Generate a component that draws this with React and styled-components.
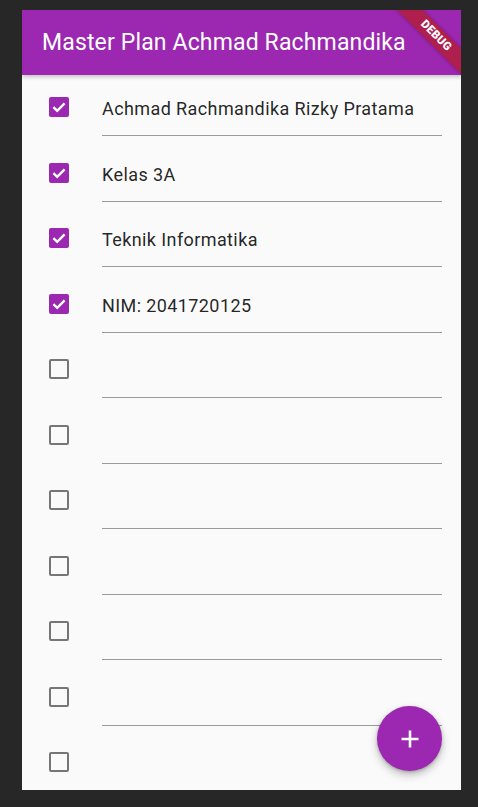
import React from 'react';
import styled, { createGlobalStyle } from 'styled-components';

const GlobalStyle = createGlobalStyle`
  html, body {
    margin: 0;
    padding: 0;
    background: #272727;
    font-family: Roboto, 'Noto Sans', sans-serif;
  }
`;

const Screen = styled.div`
  width: 478px;
  height: 807px;
  box-sizing: border-box;
  padding: 10px 17px 17px 22px;
  display: flex;
`;

const Phone = styled.div`
  position: relative;
  flex: 1;
  display: flex;
  flex-direction: column;
  background: #fafafa;
  overflow: hidden;
`;

const AppBar = styled.header`
  position: relative;
  z-index: 2;
  height: 65px;
  flex-shrink: 0;
  display: flex;
  align-items: center;
  padding-left: 20px;
  background: #9c27b0;
  box-shadow: 0 2px 4px rgba(0, 0, 0, 0.22);
`;

const Title = styled.h1`
  margin: 0;
  color: #fff;
  font-size: 23px;
  letter-spacing: 0.15px;
  font-weight: 400;
  white-space: nowrap;
`;

const List = styled.div`
  flex: 1;
  overflow: hidden;
`;

const Row = styled.div`
  height: 65.5px;
  display: flex;
  align-items: flex-start;
`;

const CheckCell = styled.div`
  width: 80px;
  flex-shrink: 0;
  padding: 22px 0 0 27px;
  box-sizing: border-box;
`;

const Box = styled.div`
  width: 20px;
  height: 20px;
  box-sizing: border-box;
  border-radius: 2px;
  border: 2px solid ${(p) => (p.$checked ? '#9c27b0' : '#767676')};
  background: ${(p) => (p.$checked ? '#9c27b0' : 'transparent')};
  display: flex;
  align-items: center;
  justify-content: center;
`;

const Field = styled.div`
  flex: 1;
  margin-right: 19px;
  padding: 24px 0 16px;
  border-bottom: 1px solid #9a9a9a;
  font-size: 18px;
  letter-spacing: 0.4px;
  line-height: 20px;
  height: 20px;
  color: rgba(0, 0, 0, 0.87);
  white-space: nowrap;
`;

const Banner = styled.div`
  position: absolute;
  z-index: 3;
  top: 16.5px;
  right: -34.5px;
  width: 120px;
  height: 17.5px;
  transform: rotate(45deg);
  background: rgba(183, 28, 28, 0.66);
  box-shadow: 0 0 4px rgba(0, 0, 0, 0.25);
  display: flex;
  align-items: center;
  justify-content: center;
  color: #fff;
  font-size: 11.5px;
  font-weight: 900;
  letter-spacing: 0.3px;
  line-height: 1;
`;

const Fab = styled.button`
  position: absolute;
  z-index: 2;
  right: 19px;
  bottom: 19px;
  width: 65px;
  height: 65px;
  border: none;
  border-radius: 50%;
  padding: 0;
  background: #9c27b0;
  box-shadow: 0 4px 8px rgba(0, 0, 0, 0.25), 0 1px 3px rgba(0, 0, 0, 0.2);
  display: flex;
  align-items: center;
  justify-content: center;
`;

const Check = () => (
  <svg width="16" height="16" viewBox="0 0 16 16">
    <polyline
      points="2.4,8.2 6.2,11.8 13.6,4.4"
      fill="none"
      stroke="#fff"
      strokeWidth="2.4"
    />
  </svg>
);

const Plus = () => (
  <svg width="20" height="20" viewBox="0 0 20 20">
    <path d="M10 1.5v17M1.5 10h17" stroke="#fff" strokeWidth="2.6" />
  </svg>
);

const tasks = [
  { text: 'Achmad Rachmandika Rizky Pratama', done: true },
  { text: 'Kelas 3A', done: true },
  { text: 'Teknik Informatika', done: true },
  { text: 'NIM: 2041720125', done: true },
  ...Array.from({ length: 8 }, () => ({ text: '', done: false })),
];

export default function App() {
  return (
    <>
      <GlobalStyle />
      <Screen>
        <Phone>
          <AppBar>
            <Title>Master Plan Achmad Rachmandika</Title>
          </AppBar>
          <List>
            {tasks.map((t, i) => (
              <Row key={i}>
                <CheckCell>
                  <Box $checked={t.done}>{t.done && <Check />}</Box>
                </CheckCell>
                <Field>{t.text}</Field>
              </Row>
            ))}
          </List>
          <Banner>DEBUG</Banner>
          <Fab aria-label="add">
            <Plus />
          </Fab>
        </Phone>
      </Screen>
    </>
  );
}
